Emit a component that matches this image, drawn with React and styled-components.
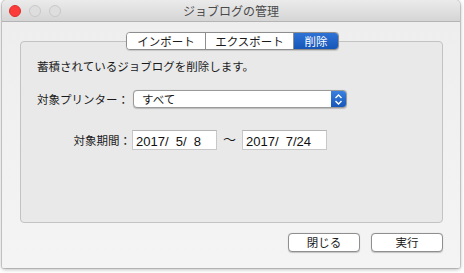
import React from "react";
import styled, { createGlobalStyle } from "styled-components";

const Global = createGlobalStyle`
  html, body { margin: 0; padding: 0; background: #ffffff; }
  body { font-family: "Noto Sans CJK JP", "Noto Sans", sans-serif; }
`;

const Page = styled.div`
  width: 464px;
  height: 273px;
  padding: 0 4px 0 2px;
  box-sizing: border-box;
`;

const Window = styled.div`
  width: 458px;
  height: 268px;
  background: #efefef;
  border-radius: 5px 5px 2px 2px;
  box-shadow: 0 1px 4px rgba(0, 0, 0, 0.35), 0 0 0 1px rgba(0, 0, 0, 0.12);
  display: flex;
  flex-direction: column;
  overflow: hidden;
`;

const TitleBar = styled.div`
  height: 21px;
  flex: none;
  background: linear-gradient(#ebebeb, #d5d5d5);
  border-bottom: 1px solid #b4b4b4;
  display: flex;
  align-items: center;
  position: relative;
  padding-left: 7px;
  gap: 8px;
`;

const Light = styled.span`
  width: 12px;
  height: 12px;
  border-radius: 50%;
  box-sizing: border-box;
  background: ${(p) => (p.$red ? "#fc3b3b" : "#dedede")};
  border: 1px solid ${(p) => (p.$red ? "#de2f2a" : "#c8c8c8")};
`;

const Title = styled.div`
  position: absolute;
  left: 0;
  right: 0;
  top: 0;
  bottom: 0;
  display: flex;
  align-items: center;
  justify-content: center;
  font-size: 12px;
  color: #4a4a4a;
  pointer-events: none;
`;

const Body = styled.div`
  flex: 1;
  display: flex;
  flex-direction: column;
  padding: 10px 17px 0 18px;
  background: linear-gradient(#eeeeee, #f4f4f4);
`;

const Tabs = styled.div`
  align-self: flex-start;
  margin-left: 106px;
  display: flex;
  height: 18px;
  box-sizing: border-box;
  border: 1px solid #8e8e8e;
  border-radius: 4px;
  background: #ffffff;
  overflow: hidden;
  position: relative;
  z-index: 1;
  box-shadow: 0 0.5px 1px rgba(0,0,0,0.15);
`;

const Tab = styled.div`
  font-size: 11.5px;
  line-height: 16px;
  width: ${(p) => p.$w}px;
  text-align: center;
  color: ${(p) => (p.$active ? "#ffffff" : "#1a1a1a")};
  background: ${(p) => (p.$active ? "linear-gradient(#2f72d6, #1556b7)" : "#ffffff")};
  border-left: ${(p) => (p.$first ? "none" : "1px solid #8e8e8e")};
  box-sizing: border-box;
`;

const Box = styled.div`
  margin-top: -9px;
  width: 423px;
  height: 182px;
  box-sizing: border-box;
  border: 1px solid #c3c3c3;
  border-radius: 4px;
  background: #e9e9e9;
  padding: 15px 0 0 16px;
  display: flex;
  flex-direction: column;
`;

const Text = styled.div`
  font-size: 11.5px;
  line-height: 18px;
  color: #1a1a1a;
`;

const Row = styled.div`
  display: flex;
  align-items: center;
  margin-top: ${(p) => p.$mt}px;
`;

const Label = styled.div`
  font-size: 11.5px;
  color: #1a1a1a;
  width: ${(p) => p.$w}px;
  text-align: ${(p) => p.$align || "left"};
  white-space: nowrap;
`;

const Popup = styled.div`
  margin-left: 2px;
  width: 214px;
  height: 18px;
  box-sizing: border-box;
  border: 1px solid #9a9a9a;
  border-radius: 4px;
  background: #ffffff;
  display: flex;
  overflow: hidden;
  box-shadow: 0 0.5px 1px rgba(0,0,0,0.2);
`;

const PopupText = styled.div`
  flex: 1;
  font-size: 11.5px;
  line-height: 16px;
  padding-left: 8px;
  color: #1a1a1a;
`;

const PopupArrows = styled.div`
  width: 15px;
  background: linear-gradient(#3a80e0, #1657b8);
  display: flex;
  align-items: center;
  justify-content: center;
`;

const Field = styled.div`
  margin-left: ${(p) => p.$ml || 0}px;
  width: 85px;
  height: 20px;
  box-sizing: border-box;
  border: 1px solid #c8c8c8;
  border-top-color: #b5b5b5;
  background: #ffffff;
  font-family: "Liberation Sans", Arial, sans-serif;
  font-size: 13px;
  line-height: 19px;
  padding-left: 3px;
  padding-top: 1px;
  white-space: pre;
  color: #111;
`;

const Tilde = styled.div`
  font-size: 13px;
  color: #1a1a1a;
  width: 25px;
  text-align: center;
  margin-top: -4px;
`;

const Footer = styled.div`
  display: flex;
  justify-content: flex-end;
  gap: 11px;
  margin-top: 10px;
  width: 423px;
`;

const Button = styled.button`
  width: 72px;
  height: 19px;
  padding: 0;
  border: 1px solid #8f8f8f;
  border-radius: 4px;
  background: #ffffff;
  font-family: "Noto Sans CJK JP", sans-serif;
  font-size: 11.5px;
  line-height: 17px;
  color: #1a1a1a;
  box-shadow: 0 0.5px 1px rgba(0,0,0,0.2);
`;

export default function App() {
  return (
    <>
      <Global />
      <Page>
        <Window>
          <TitleBar>
            <Light $red />
            <Light />
            <Light />
            <Title>ジョブログの管理</Title>
          </TitleBar>
          <Body>
            <Tabs>
              <Tab $first $w={78}>インポート</Tab>
              <Tab $w={88}>エクスポート</Tab>
              <Tab $active $w={45}>削除</Tab>
            </Tabs>
            <Box>
              <Text>蓄積されているジョブログを削除します。</Text>
              <Row $mt={15}>
                <Label $w={94}>対象プリンター：</Label>
                <Popup>
                  <PopupText>すべて</PopupText>
                  <PopupArrows>
                    <svg width="9" height="13" viewBox="0 0 9 13">
                      <path d="M1.5 5 L4.5 2 L7.5 5 M1.5 8 L4.5 11 L7.5 8" fill="none" stroke="#fff" strokeWidth="1.4" />
                    </svg>
                  </PopupArrows>
                </Popup>
              </Row>
              <Row $mt={22}>
                <Label $w={94} $align="right">対象期間：</Label>
                <Field $ml={1}>{"2017/  5/  8"}</Field>
                <Tilde>〜</Tilde>
                <Field>{"2017/  7/24"}</Field>
              </Row>
            </Box>
            <Footer>
              <Button>閉じる</Button>
              <Button>実行</Button>
            </Footer>
          </Body>
        </Window>
      </Page>
    </>
  );
}
